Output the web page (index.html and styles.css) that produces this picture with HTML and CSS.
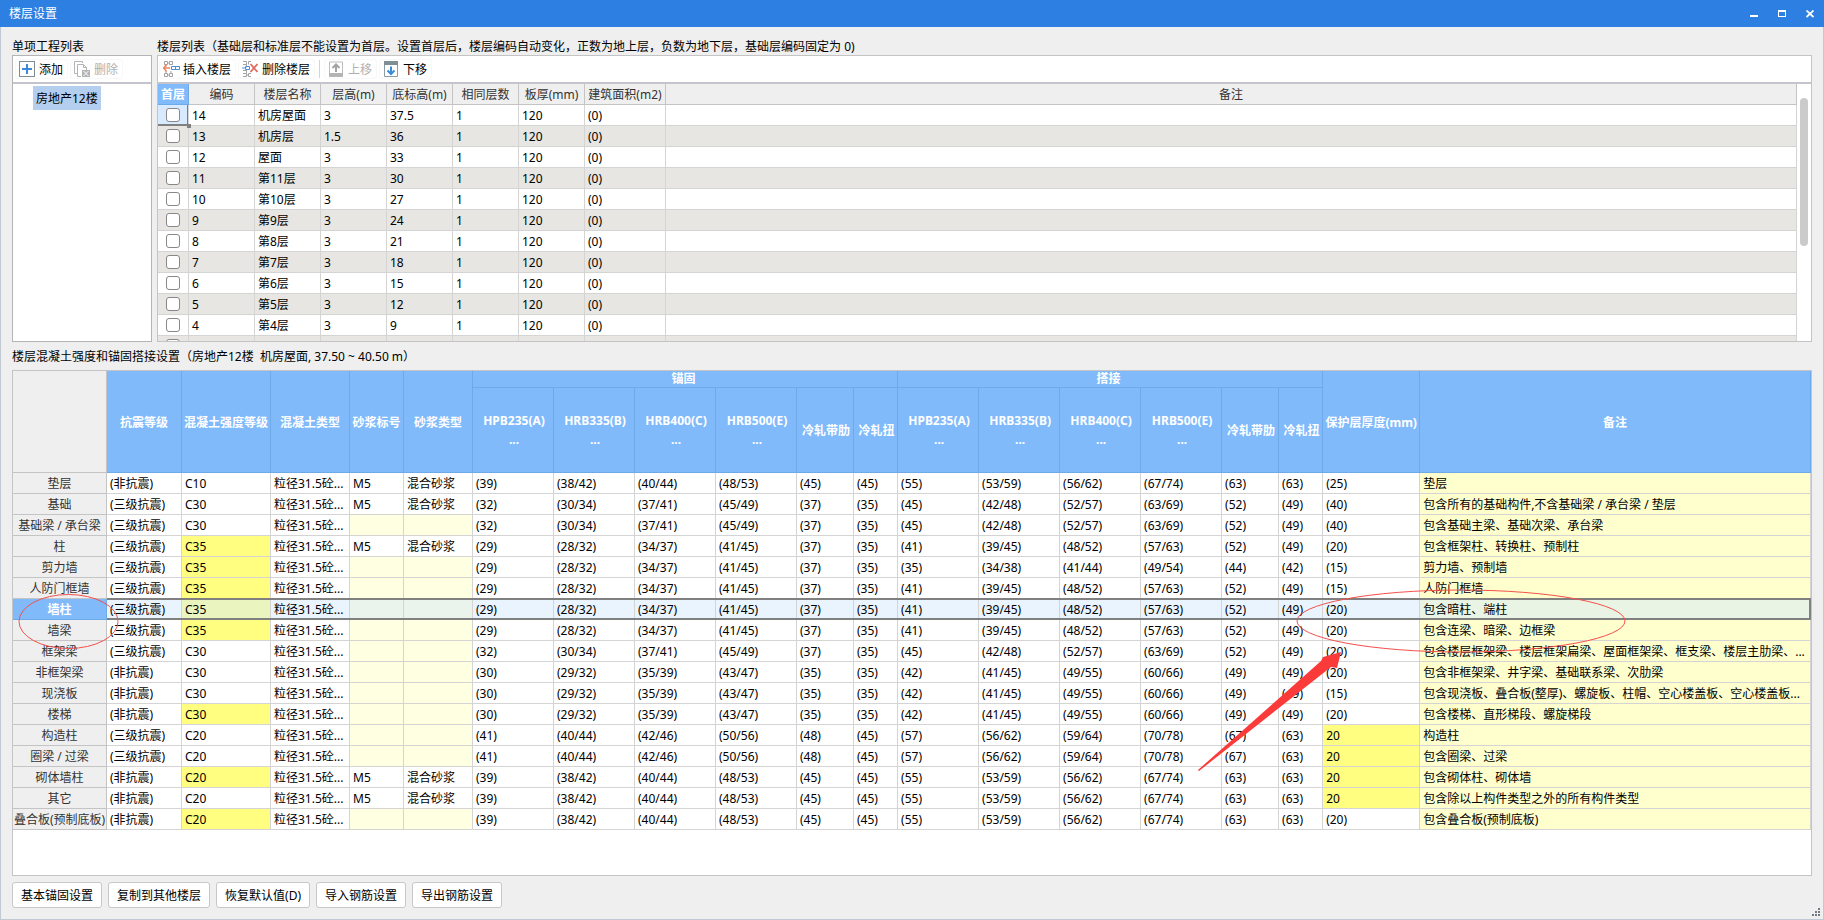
FILE: index.html
```html
<!DOCTYPE html>
<html lang="zh-CN">
<head>
<meta charset="utf-8">
<title>楼层设置</title>
<link rel="stylesheet" href="styles.css">
</head>
<body>
<div class="window">
  <header class="titlebar">
    <h1 class="title">楼层设置</h1>
    <div class="window-controls">
      <button class="win-btn" aria-label="最小化"><svg width="8" height="8" shape-rendering="crispEdges"><rect y="5" width="8" height="2" fill="#fff"/></svg></button>
      <button class="win-btn" aria-label="最大化"><svg width="8" height="8" shape-rendering="crispEdges"><path d="M0 0h8v7H0zM1 2v4h6V2z" fill="#fff" fill-rule="evenodd"/></svg></button>
      <button class="win-btn" aria-label="关闭"><svg width="8" height="8"><path d="M.5 0.5l7 6.500M7.500 .5l-7 6.500" stroke="#fff" stroke-width="1.800"/></svg></button>
    </div>
  </header>

  <main class="content">
    <div class="upper">
      <section class="projects">
        <h2 class="caption">单项工程列表</h2>
        <div class="panel">
          <div class="toolbar">
            <button class="tool"><svg class="icon" viewBox="0 0 17 17"><rect x=".5" y=".5" width="15" height="15" fill="#fff" stroke="#7d8b92"/><path d="M8 3v10M3 8h10" stroke="#3b8ad8" stroke-width="2"/></svg>添加</button>
            <button class="tool" disabled><svg class="icon" viewBox="0 0 17 17"><path d="M3 12.500H.5V.5h8V2" fill="none" stroke="#b4b4b4"/><path d="M7 15.500H3.500v-12h6l3 3V9M9.500 3.500v3h3" fill="none" stroke="#b4b4b4"/><path d="M8 9h8v7H8z" fill="#b4b4b4"/><path d="M9.500 10l5 5M14.500 10l-5 5" stroke="#fff"/></svg>删除</button>
          </div>
          <ul class="tree"><li class="tree-item">房地产12楼</li></ul>
        </div>
      </section>

      <section class="floors">
        <h2 class="caption">楼层列表（基础层和标准层不能设置为首层。设置首层后，楼层编码自动变化，正数为地上层，负数为地下层，基础层编码固定为 0)</h2>
        <div class="panel">
          <div class="toolbar">
            <button class="tool"><svg class="icon" viewBox="0 0 17 17"><path d="M1.500 .5h3v3h-3zM6.500 .5h3v3h-3zM1.500 12.500h3v3h-3zM6.500 12.500h3v3h-3zM3 4v2M3 10v2M8 10v2M4.500 2h2M4.500 14h2" fill="none" stroke="#a3a3a3"/><path d="M8.500 5.500h4v3h-4zM12.500 5.500h4v3h-4z" fill="#fff" stroke="#4a90d9"/><path d="M0 7h7M3.500 3.500L.7 7l2.800 3.500" fill="none" stroke="#f08560" stroke-width="1.500"/></svg>插入楼层</button>
            <button class="tool"><svg class="icon" viewBox="0 0 17 17"><path d="M1 .5h3.500v3H1M9 .5H6.500v3M4.500 3.500v3M1 9.500h3M4.500 9v3M1 12.500h3.500v3H1M9 12.500H6.500v3H9M4.500 14h2" fill="none" stroke="#a3a3a3"/><path d="M3.500 5.500h4v3h-4zM0 7h3.500" fill="none" stroke="#4a90d9"/><path d="M8.500 3l7 8M15.500 3l-7 8" stroke="#e26a5e" stroke-width="1.800"/></svg>删除楼层</button>
            <span class="divider"></span>
            <button class="tool" disabled><svg class="icon" viewBox="0 0 17 17"><path d="M1.500 1h13v14h-13z" fill="#fff" stroke="#bdbdbd"/><path d="M1 12h14v4H1z" fill="#b4b4b4"/><path d="M8 11V3.500M4.500 7L8 3.500 11.500 7" fill="none" stroke="#a3a3a3" stroke-width="2"/></svg>上移</button>
            <button class="tool"><svg class="icon" viewBox="0 0 17 17"><path d="M1.500 1h13v14.500h-13z" fill="#fff" stroke="#8b9ba3"/><path d="M1 0h14v4H1z" fill="#7d8e97"/><path d="M8 5.500V13M4.500 9.500L8 13l3.500-3.500" fill="none" stroke="#3b8ad8" stroke-width="2"/></svg>下移</button>
          </div>
          <div class="scroll-area">
            <table class="floor-table">
              <colgroup><col class="w31"><col class="w66"><col class="w66"><col class="w66"><col class="w66"><col class="w66"><col class="w66"><col class="w81"><col></colgroup>
              <thead><tr><th class="active">首层</th><th>编码</th><th>楼层名称</th><th>层高(m)</th><th>底标高(m)</th><th>相同层数</th><th>板厚(mm)</th><th>建筑面积(m2)</th><th>备注</th></tr></thead>
              <tbody>
                <tr><td class="current"><input type="checkbox" aria-label="首层 14"></td><td>14</td><td>机房屋面</td><td>3</td><td>37.5</td><td>1</td><td>120</td><td>(0)</td><td></td></tr>
                <tr><td><input type="checkbox" aria-label="首层 13"></td><td>13</td><td>机房层</td><td>1.5</td><td>36</td><td>1</td><td>120</td><td>(0)</td><td></td></tr>
                <tr><td><input type="checkbox" aria-label="首层 12"></td><td>12</td><td>屋面</td><td>3</td><td>33</td><td>1</td><td>120</td><td>(0)</td><td></td></tr>
                <tr><td><input type="checkbox" aria-label="首层 11"></td><td>11</td><td>第11层</td><td>3</td><td>30</td><td>1</td><td>120</td><td>(0)</td><td></td></tr>
                <tr><td><input type="checkbox" aria-label="首层 10"></td><td>10</td><td>第10层</td><td>3</td><td>27</td><td>1</td><td>120</td><td>(0)</td><td></td></tr>
                <tr><td><input type="checkbox" aria-label="首层 9"></td><td>9</td><td>第9层</td><td>3</td><td>24</td><td>1</td><td>120</td><td>(0)</td><td></td></tr>
                <tr><td><input type="checkbox" aria-label="首层 8"></td><td>8</td><td>第8层</td><td>3</td><td>21</td><td>1</td><td>120</td><td>(0)</td><td></td></tr>
                <tr><td><input type="checkbox" aria-label="首层 7"></td><td>7</td><td>第7层</td><td>3</td><td>18</td><td>1</td><td>120</td><td>(0)</td><td></td></tr>
                <tr><td><input type="checkbox" aria-label="首层 6"></td><td>6</td><td>第6层</td><td>3</td><td>15</td><td>1</td><td>120</td><td>(0)</td><td></td></tr>
                <tr><td><input type="checkbox" aria-label="首层 5"></td><td>5</td><td>第5层</td><td>3</td><td>12</td><td>1</td><td>120</td><td>(0)</td><td></td></tr>
                <tr><td><input type="checkbox" aria-label="首层 4"></td><td>4</td><td>第4层</td><td>3</td><td>9</td><td>1</td><td>120</td><td>(0)</td><td></td></tr>
                <tr><td><input type="checkbox" aria-label="首层"></td><td></td><td></td><td></td><td></td><td></td><td></td><td></td><td></td></tr>
              </tbody>
            </table>
            <div class="scrollbar"><div class="thumb"></div></div>
          </div>
        </div>
      </section>
    </div>

    <h2 class="caption lower-caption">楼层混凝土强度和锚固搭接设置（房地产12楼&nbsp; 机房屋面, 37.50 ~ 40.50 m）</h2>

    <section class="settings">
      <table class="settings-table">
        <colgroup><col class="w94"><col class="w75"><col class="w89"><col class="w79"><col class="w54"><col class="w69"><col class="w81"><col class="w81"><col class="w81"><col class="w81"><col class="w57"><col class="w44"><col class="w81"><col class="w81"><col class="w81"><col class="w81"><col class="w57"><col class="w44"><col class="w97"><col></colgroup>
        <thead>
          <tr class="group-row"><th rowspan="2" class="corner"></th><th rowspan="2">抗震等级</th><th rowspan="2">混凝土强度等级</th><th rowspan="2">混凝土类型</th><th rowspan="2">砂浆标号</th><th rowspan="2">砂浆类型</th><th colspan="6" class="group">锚固</th><th colspan="6" class="group">搭接</th><th rowspan="2">保护层厚度(mm)</th><th rowspan="2">备注</th></tr>
          <tr class="grade-row"><th>HPB235(A)<br>...</th><th>HRB335(B)<br>...</th><th>HRB400(C)<br>...</th><th>HRB500(E)<br>...</th><th>冷轧带肋</th><th>冷轧扭</th><th>HPB235(A)<br>...</th><th>HRB335(B)<br>...</th><th>HRB400(C)<br>...</th><th>HRB500(E)<br>...</th><th>冷轧带肋</th><th>冷轧扭</th></tr>
        </thead>
        <tbody>
          <tr><th>垫层</th><td>(非抗震)</td><td>C10</td><td>粒径31.5砼...</td><td>M5</td><td>混合砂浆</td><td>(39)</td><td>(38/42)</td><td>(40/44)</td><td>(48/53)</td><td>(45)</td><td>(45)</td><td>(55)</td><td>(53/59)</td><td>(56/62)</td><td>(67/74)</td><td>(63)</td><td>(63)</td><td>(25)</td><td class="note">垫层</td></tr>
          <tr><th>基础</th><td>(三级抗震)</td><td>C30</td><td>粒径31.5砼...</td><td>M5</td><td>混合砂浆</td><td>(32)</td><td>(30/34)</td><td>(37/41)</td><td>(45/49)</td><td>(37)</td><td>(35)</td><td>(45)</td><td>(42/48)</td><td>(52/57)</td><td>(63/69)</td><td>(52)</td><td>(49)</td><td>(40)</td><td class="note">包含所有的基础构件,不含基础梁 / 承台梁 / 垫层</td></tr>
          <tr><th>基础梁 / 承台梁</th><td>(三级抗震)</td><td>C30</td><td>粒径31.5砼...</td><td class="pale"></td><td class="pale"></td><td>(32)</td><td>(30/34)</td><td>(37/41)</td><td>(45/49)</td><td>(37)</td><td>(35)</td><td>(45)</td><td>(42/48)</td><td>(52/57)</td><td>(63/69)</td><td>(52)</td><td>(49)</td><td>(40)</td><td class="note">包含基础主梁、基础次梁、承台梁</td></tr>
          <tr><th>柱</th><td>(三级抗震)</td><td class="mark">C35</td><td>粒径31.5砼...</td><td>M5</td><td>混合砂浆</td><td>(29)</td><td>(28/32)</td><td>(34/37)</td><td>(41/45)</td><td>(37)</td><td>(35)</td><td>(41)</td><td>(39/45)</td><td>(48/52)</td><td>(57/63)</td><td>(52)</td><td>(49)</td><td>(20)</td><td class="note">包含框架柱、转换柱、预制柱</td></tr>
          <tr><th>剪力墙</th><td>(三级抗震)</td><td class="mark">C35</td><td>粒径31.5砼...</td><td class="pale"></td><td class="pale"></td><td>(29)</td><td>(28/32)</td><td>(34/37)</td><td>(41/45)</td><td>(37)</td><td>(35)</td><td>(35)</td><td>(34/38)</td><td>(41/44)</td><td>(49/54)</td><td>(44)</td><td>(42)</td><td>(15)</td><td class="note">剪力墙、预制墙</td></tr>
          <tr><th>人防门框墙</th><td>(三级抗震)</td><td class="mark">C35</td><td>粒径31.5砼...</td><td class="pale"></td><td class="pale"></td><td>(29)</td><td>(28/32)</td><td>(34/37)</td><td>(41/45)</td><td>(37)</td><td>(35)</td><td>(41)</td><td>(39/45)</td><td>(48/52)</td><td>(57/63)</td><td>(52)</td><td>(49)</td><td>(15)</td><td class="note">人防门框墙</td></tr>
          <tr class="selected"><th>墙柱</th><td>(三级抗震)</td><td class="mark">C35</td><td>粒径31.5砼...</td><td class="pale"></td><td class="pale"></td><td>(29)</td><td>(28/32)</td><td>(34/37)</td><td>(41/45)</td><td>(37)</td><td>(35)</td><td>(41)</td><td>(39/45)</td><td>(48/52)</td><td>(57/63)</td><td>(52)</td><td>(49)</td><td>(20)</td><td class="note">包含暗柱、端柱</td></tr>
          <tr><th>墙梁</th><td>(三级抗震)</td><td class="mark">C35</td><td>粒径31.5砼...</td><td class="pale"></td><td class="pale"></td><td>(29)</td><td>(28/32)</td><td>(34/37)</td><td>(41/45)</td><td>(37)</td><td>(35)</td><td>(41)</td><td>(39/45)</td><td>(48/52)</td><td>(57/63)</td><td>(52)</td><td>(49)</td><td>(20)</td><td class="note">包含连梁、暗梁、边框梁</td></tr>
          <tr><th>框架梁</th><td>(三级抗震)</td><td>C30</td><td>粒径31.5砼...</td><td class="pale"></td><td class="pale"></td><td>(32)</td><td>(30/34)</td><td>(37/41)</td><td>(45/49)</td><td>(37)</td><td>(35)</td><td>(45)</td><td>(42/48)</td><td>(52/57)</td><td>(63/69)</td><td>(52)</td><td>(49)</td><td>(20)</td><td class="note">包含楼层框架梁、楼层框架扁梁、屋面框架梁、框支梁、楼层主肋梁、...</td></tr>
          <tr><th>非框架梁</th><td>(非抗震)</td><td>C30</td><td>粒径31.5砼...</td><td class="pale"></td><td class="pale"></td><td>(30)</td><td>(29/32)</td><td>(35/39)</td><td>(43/47)</td><td>(35)</td><td>(35)</td><td>(42)</td><td>(41/45)</td><td>(49/55)</td><td>(60/66)</td><td>(49)</td><td>(49)</td><td>(20)</td><td class="note">包含非框架梁、井字梁、基础联系梁、次肋梁</td></tr>
          <tr><th>现浇板</th><td>(非抗震)</td><td>C30</td><td>粒径31.5砼...</td><td class="pale"></td><td class="pale"></td><td>(30)</td><td>(29/32)</td><td>(35/39)</td><td>(43/47)</td><td>(35)</td><td>(35)</td><td>(42)</td><td>(41/45)</td><td>(49/55)</td><td>(60/66)</td><td>(49)</td><td>(49)</td><td>(15)</td><td class="note">包含现浇板、叠合板(整厚)、螺旋板、柱帽、空心楼盖板、空心楼盖板...</td></tr>
          <tr><th>楼梯</th><td>(非抗震)</td><td class="mark">C30</td><td>粒径31.5砼...</td><td class="pale"></td><td class="pale"></td><td>(30)</td><td>(29/32)</td><td>(35/39)</td><td>(43/47)</td><td>(35)</td><td>(35)</td><td>(42)</td><td>(41/45)</td><td>(49/55)</td><td>(60/66)</td><td>(49)</td><td>(49)</td><td>(20)</td><td class="note">包含楼梯、直形梯段、螺旋梯段</td></tr>
          <tr><th>构造柱</th><td>(三级抗震)</td><td>C20</td><td>粒径31.5砼...</td><td class="pale"></td><td class="pale"></td><td>(41)</td><td>(40/44)</td><td>(42/46)</td><td>(50/56)</td><td>(48)</td><td>(45)</td><td>(57)</td><td>(56/62)</td><td>(59/64)</td><td>(70/78)</td><td>(67)</td><td>(63)</td><td class="mark">20</td><td class="note">构造柱</td></tr>
          <tr><th>圈梁 / 过梁</th><td>(三级抗震)</td><td>C20</td><td>粒径31.5砼...</td><td class="pale"></td><td class="pale"></td><td>(41)</td><td>(40/44)</td><td>(42/46)</td><td>(50/56)</td><td>(48)</td><td>(45)</td><td>(57)</td><td>(56/62)</td><td>(59/64)</td><td>(70/78)</td><td>(67)</td><td>(63)</td><td class="mark">20</td><td class="note">包含圈梁、过梁</td></tr>
          <tr><th>砌体墙柱</th><td>(非抗震)</td><td class="mark">C20</td><td>粒径31.5砼...</td><td>M5</td><td>混合砂浆</td><td>(39)</td><td>(38/42)</td><td>(40/44)</td><td>(48/53)</td><td>(45)</td><td>(45)</td><td>(55)</td><td>(53/59)</td><td>(56/62)</td><td>(67/74)</td><td>(63)</td><td>(63)</td><td class="mark">20</td><td class="note">包含砌体柱、砌体墙</td></tr>
          <tr><th>其它</th><td>(非抗震)</td><td>C20</td><td>粒径31.5砼...</td><td>M5</td><td>混合砂浆</td><td>(39)</td><td>(38/42)</td><td>(40/44)</td><td>(48/53)</td><td>(45)</td><td>(45)</td><td>(55)</td><td>(53/59)</td><td>(56/62)</td><td>(67/74)</td><td>(63)</td><td>(63)</td><td class="mark">20</td><td class="note">包含除以上构件类型之外的所有构件类型</td></tr>
          <tr><th>叠合板(预制底板)</th><td>(非抗震)</td><td class="mark">C20</td><td>粒径31.5砼...</td><td class="pale"></td><td class="pale"></td><td>(39)</td><td>(38/42)</td><td>(40/44)</td><td>(48/53)</td><td>(45)</td><td>(45)</td><td>(55)</td><td>(53/59)</td><td>(56/62)</td><td>(67/74)</td><td>(63)</td><td>(63)</td><td>(20)</td><td class="note">包含叠合板(预制底板)</td></tr>
        </tbody>
      </table>
      <svg class="annotations" aria-hidden="true">
        <g fill="none" stroke="#f4504c" stroke-width="1"><ellipse cx="55.500" cy="250.500" rx="49.500" ry="27"/><ellipse cx="1448" cy="250" rx="164" ry="31"/></g>
        <path d="M1185 399L1308 290 1310 286 1328 281 1324 297 1318 296 1186 400z" fill="#fb3b3a"/>
      </svg>
    </section>

    <footer class="actions">
      <button class="action">基本锚固设置</button>
      <button class="action">复制到其他楼层</button>
      <button class="action">恢复默认值(D)</button>
      <button class="action">导入钢筋设置</button>
      <button class="action">导出钢筋设置</button>
    </footer>
  </main>
  <svg class="grip" width="8" height="8" shape-rendering="crispEdges" aria-hidden="true"><path d="M6 0h2v2H6zM3 3h2v2H3zM6 3h2v2H6zM0 6h2v2H0zM3 6h2v2H3zM6 6h2v2H6z" fill="#727982"/></svg>
</div>
</body>
</html>
```

FILE: styles.css
```css
* { box-sizing: border-box; }

body {
  margin: 0;
  font: 12px/16px "Noto Sans", "Noto Sans CJK SC", sans-serif;
  color: #000;
  background: #efefef;
}

button { font: inherit; color: inherit; }

.window {
  position: relative;
  display: flex;
  flex-direction: column;
  min-height: 100vh;
  border: 1px solid #c0c8d4;
  border-top: 0;
}

.titlebar {
  display: flex;
  align-items: center;
  justify-content: space-between;
  height: 27px;
  margin: 0 -1px;
  padding: 0 6px 0 9px;
  background: #2d7fe2;
  color: #fff;
}
.title { margin: 0; font-size: 12px; font-weight: 400; }
.window-controls { display: flex; gap: 12px; }
.win-btn {
  display: grid;
  place-items: center;
  width: 16px;
  height: 16px;
  padding: 0;
  border: 0;
  background: none;
}

.content {
  display: flex;
  flex: 1;
  flex-direction: column;
  padding: 11px;
}
.caption {
  margin: 0;
  height: 17px;
  font-size: 12px;
  font-weight: 400;
  line-height: 18px;
  white-space: nowrap;
}

.upper { display: flex; gap: 5px; }
.projects { flex: 0 0 140px; }
.floors { flex: 1; min-width: 0; }
.panel {
  display: flex;
  flex-direction: column;
  height: 287px;
  border: 1px solid #c4c4c4;
  background: #fff;
}
.projects .panel { border-color: #b4b4b4; }

.toolbar {
  display: flex;
  flex: 0 0 28px;
  align-items: center;
  gap: 2px;
  padding-left: 2px;
  border-bottom: 2px solid #c4c4cc;
}
.floors .toolbar { padding-left: 1px; }
.tool {
  display: flex;
  align-items: center;
  gap: 3px;
  height: 20px;
  padding: 1px 4px 0 3px;
  border: 1px solid #f8f8f8;
  border-radius: 3px;
  background: #fff;
}
.tool:disabled { color: #b0b0b0; }
.icon { width: 17px; height: 17px; }
.divider { width: 1px; height: 18px; margin: 0 2px; background: #d4d4d4; }

.tree { margin: 0; padding: 2px 0 0 20px; list-style: none; }
.tree-item {
  width: max-content;
  padding: 5px 3px 3px;
  background: #b3ceee;
}

table {
  width: 100%;
  border-collapse: separate;
  border-spacing: 0;
  table-layout: fixed;
}
th, td {
  height: 21px;
  padding: 2px 0 0 3px;
  border: 0 solid #d4d4d4;
  border-width: 0 1px 1px 0;
  overflow: hidden;
  text-align: left;
  white-space: nowrap;
}
th {
  padding: 2px 0 0;
  border-color: #c4c4c4;
  background: #efefef;
  color: #333;
  font-weight: 400;
  text-align: center;
}
.w31 { width: 31px; }
.w44 { width: 44px; }
.w54 { width: 54px; }
.w57 { width: 57px; }
.w66 { width: 66px; }
.w69 { width: 69px; }
.w75 { width: 75px; }
.w79 { width: 79px; }
.w81 { width: 81px; }
.w89 { width: 89px; }
.w94 { width: 94px; }
.w97 { width: 97px; }

.scroll-area {
  display: flex;
  flex: 1;
  align-items: flex-start;
  min-height: 0;
  overflow: hidden;
}
.floor-table { flex: 1; min-width: 0; }
.floor-table tbody tr:nth-child(even) { background: #e7e6e2; }
.floor-table td:first-child { padding: 0; text-align: center; }
.floor-table .active {
  border-color: #6eaae8;
  background: #80bafa;
  color: #fff;
  font-weight: 700;
}
.floor-table input {
  display: block;
  width: 14px;
  height: 14px;
  margin: 0 auto;
  border: 1px solid #888;
  border-radius: 3px;
  background: #fff;
  appearance: none;
}
.floor-table .current {
  position: relative;
  border-bottom-color: #808080;
  background: #d7eaff;
  box-shadow: inset -1px -1px #808080;
  overflow: visible;
}
.floor-table .current::after {
  content: "";
  position: absolute;
  right: -3px;
  bottom: -3px;
  width: 4px;
  height: 4px;
  background: #808080;
}
.scrollbar { flex: 0 0 14px; padding: 14px 3px 0; }
.thumb { height: 148px; border-radius: 4px; background: #cbcbcb; }

.lower-caption { margin: 6px 0 5px; }

.settings {
  position: relative;
  flex: 1;
  border: 1px solid #c4c4c4;
  background: #fff;
}
.settings-table thead th {
  border-color: #6eaae8;
  background: #80bafb;
  color: #fff;
  font-weight: 700;
}
.settings-table thead .corner { border-color: #c4c4c4; background: #efefef; }
.group-row th { height: 17px; }
.group-row .group { padding: 0 3px 0 0; }
.settings-table .grade-row th { height: 85px; padding: 0 0 0 2px; line-height: 19px; }
.mark { background: #fffe80; }
.pale { background: #ffffe1; }
.note { background: #ffffce; }

.selected th {
  border-color: #6eaae8;
  background: #80bafb;
  color: #fff;
  font-weight: 700;
}
.selected td { position: relative; overflow: visible; background: #e9f4ff; }
.selected .mark { background: #eaf4be; }
.selected .pale { background: #eaf4ec; }
.selected .note { background: #e9f4e4; }
.selected td::after {
  content: "";
  position: absolute;
  inset: -1px -1px -1px 0;
  border: solid #808080;
  border-width: 2px 0;
}
.selected .note::after { border-right-width: 2px; }

.annotations {
  position: absolute;
  top: 0;
  left: 0;
  width: 100%;
  height: 100%;
  pointer-events: none;
}

.actions { display: flex; gap: 6px; padding-top: 6px; }
.action {
  min-width: 90px;
  height: 26px;
  padding: 1px 8px 0;
  border: 1px solid #c8c8c8;
  border-radius: 3px;
  background: #fff;
}

.grip { position: absolute; right: 3px; bottom: 3px; }
```
